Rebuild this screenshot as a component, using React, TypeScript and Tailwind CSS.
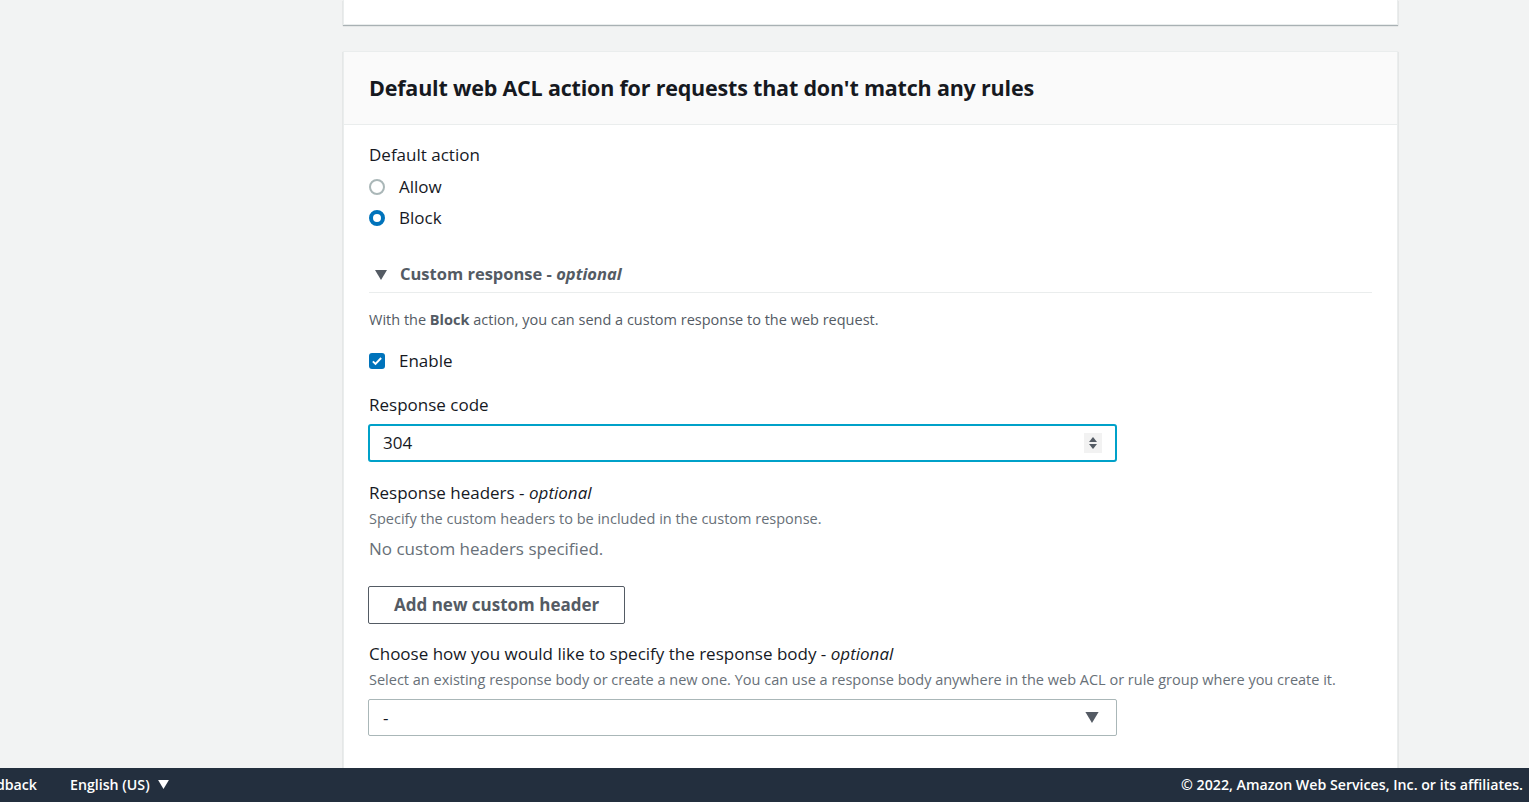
import { useState } from 'react';

function Triangle({ className }: { className?: string }) {
  return (
    <svg viewBox="0 0 12 10" className={className} fill="currentColor">
      <path d="M0 0h12L6 10z" />
    </svg>
  );
}

export default function App() {
  const [action, setAction] = useState<'allow' | 'block'>('block');
  const [enabled, setEnabled] = useState(true);
  const [code, setCode] = useState('304');

  return (
    <div
      className="h-[802px] w-[1529px] overflow-hidden bg-[#f2f3f3] flex flex-col text-[#16191f]"
      style={{ fontFamily: '"Open Sans", "Noto Sans", Arial, sans-serif' }}
    >
      <div className="flex-1 overflow-hidden pl-[343px] pr-[131px]">
        {/* previous card, cut off at top */}
        <div className="h-[25px] bg-white border border-t-0 border-[#eaeded] shadow-[0_1px_1px_0_rgba(0,28,36,0.3)]" />

        {/* Default action card */}
        <div className="mt-[26px] bg-white border border-[#eaeded] shadow-[0_1px_1px_0_rgba(0,28,36,0.3)]">
          <div className="bg-[#fafafa] border-b border-[#eaeded] h-[73px] flex items-center px-[25px]">
            <h2 className="text-[21.5px] font-bold tracking-[-0.2px]">
              Default web ACL action for requests that don't match any rules
            </h2>
          </div>

          <div className="px-[25px] pt-[17px] pb-[80px]">
            <div className="text-[17px] leading-[26px]">Default action</div>
            <div className="mt-[6px] flex flex-col gap-[5px]">
              {(['allow', 'block'] as const).map((v) => (
                <label key={v} className="flex items-center gap-[14px] h-[26px] cursor-pointer" onClick={() => setAction(v)}>
                  {action === v ? (
                    <span className="w-[16px] h-[16px] rounded-full border-[4px] border-[#0073bb] bg-white" />
                  ) : (
                    <span className="w-[16px] h-[16px] rounded-full border-2 border-[#aab7b8] bg-white" />
                  )}
                  <span className="text-[17px]">{v === 'allow' ? 'Allow' : 'Block'}</span>
                </label>
              ))}
            </div>

            {/* Custom response expandable */}
            <div className="mt-[30px] border-b border-[#eaeded] h-[32px] flex items-start pl-[6px] gap-[13px]">
              <Triangle className="w-[12px] h-[10px] text-[#545b64] mt-[9px]" />
              <span className="text-[16.5px] font-bold text-[#545b64] leading-[26px]">
                Custom response - <i>optional</i>
              </span>
            </div>

            <p className="mt-[16px] text-[14.5px] text-[#545b64] leading-[22px]">
              With the <b>Block</b> action, you can send a custom response to the web request.
            </p>

            <label className="mt-[18px] flex items-center gap-[14px] h-[24px] cursor-pointer" onClick={() => setEnabled(!enabled)}>
              <span className={`w-[16px] h-[16px] rounded-[3px] flex items-center justify-center ${enabled ? 'bg-[#0073bb]' : 'border-2 border-[#aab7b8]'}`}>
                {enabled && (
                  <svg viewBox="0 0 16 16" className="w-[12px] h-[12px]" fill="none" stroke="white" strokeWidth={2.5}>
                    <path d="M2.5 8.5l3.5 3.5 7.5-8" />
                  </svg>
                )}
              </span>
              <span className="text-[17px]">Enable</span>
            </label>

            <div className="mt-[19px] text-[17px] leading-[26px]">Response code</div>
            <div className="mt-[6px] -ml-px w-[749px] h-[38px] border-2 border-[#00a1c9] rounded-[3px] flex items-center pl-[13px] pr-[13px]">
              <input
                value={code}
                onChange={(e) => setCode(e.target.value)}
                className="flex-1 outline-none text-[17px] bg-transparent"
              />
              <div className="w-[18px] h-[20px] bg-[#f2f2f2] flex flex-col items-center justify-center gap-[2px]">
                <svg viewBox="0 0 8 5" className="w-[8px] h-[5px]" fill="#545b64"><path d="M4 0l4 5H0z" /></svg>
                <svg viewBox="0 0 8 5" className="w-[8px] h-[5px]" fill="#545b64"><path d="M0 0h8L4 5z" /></svg>
              </div>
            </div>

            <div className="mt-[18px] text-[17px] leading-[26px]">
              Response headers - <i>optional</i>
            </div>
            <p className="mt-[3px] text-[14.5px] text-[#687078] leading-[20px]">
              Specify the custom headers to be included in the custom response.
            </p>
            <p className="mt-[8px] text-[17px] text-[#687078] leading-[24px]">No custom headers specified.</p>

            <button className="mt-[25px] -ml-px h-[38px] px-[25px] border border-[#545b64] rounded-[2px] text-[17px] font-bold text-[#545b64] bg-white">
              Add new custom header
            </button>

            <div className="mt-[17px] text-[17px] leading-[26px]">
              Choose how you would like to specify the response body - <i>optional</i>
            </div>
            <p className="mt-[3px] text-[14.5px] text-[#687078] leading-[20px]">
              Select an existing response body or create a new one. You can use a response body anywhere in the web ACL or rule group where you create it.
            </p>
            <div className="mt-[9px] -ml-px w-[749px] h-[37px] border border-[#aab7b8] rounded-[2px] flex items-center pl-[14px] pr-[17px]">
              <span className="flex-1 text-[17px]">-</span>
              <Triangle className="w-[14px] h-[11px] text-[#545b64]" />
            </div>
          </div>
        </div>
      </div>

      {/* footer */}
      <div className="h-[34px] shrink-0 bg-[#232f3e] text-white flex items-center text-[14.2px] font-semibold px-[6px]">
        <span className="ml-[-34px]">Feedback</span>
        <span className="ml-[33px] flex items-center gap-[8px]">
          English (US)
          <Triangle className="w-[11px] h-[9px] text-white" />
        </span>
        <span className="ml-auto">© 2022, Amazon Web Services, Inc. or its affiliates.</span>
      </div>
    </div>
  );
}
